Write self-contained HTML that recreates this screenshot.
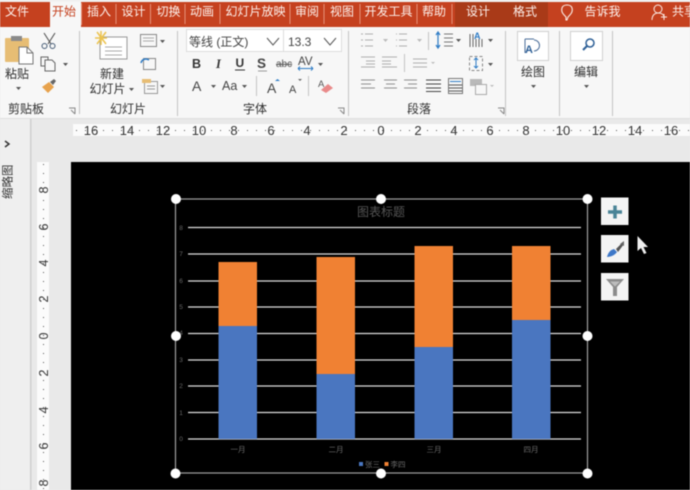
<!DOCTYPE html>
<html lang="zh">
<head>
<meta charset="utf-8">
<title>PowerPoint</title>
<style>
html,body{margin:0;padding:0;width:690px;height:490px;overflow:hidden;background:#e9e9e9}
svg{display:block;filter:blur(.45px)}
text{font-family:"Liberation Sans","Noto Sans CJK SC",sans-serif}
.t{font-size:12px;fill:#fdf1ec;text-anchor:middle}
.r{font-size:12px;fill:#2f2f2f;text-anchor:middle}
.ru{font-size:13px;fill:#333;text-anchor:middle}
.rv{font-size:12.5px;fill:#333;text-anchor:middle}
.ax{font-size:6.5px;fill:#666;text-anchor:middle}
.i{fill:none;stroke:#666;stroke-width:1}
.sep{stroke:#c4c4c4;stroke-width:1}
.grid{stroke:#dcdcdc;stroke-width:1.2}
.h{fill:#fff}
</style>
</head>
<body>
<svg width="690" height="490" viewBox="0 0 690 490" xmlns="http://www.w3.org/2000/svg">
<!-- backgrounds -->
<rect width="690" height="490" fill="#e9e9e9"/>
<rect width="690" height="2" fill="#f2f2f2"/>
<rect y="2" width="690" height="25" fill="#c5411f"/>
<rect x="455" y="2" width="93" height="25" fill="#a93a18"/>
<rect x="50" y="2" width="31" height="26" fill="#f7f7f7"/>
<rect y="27" width="690" height="91" fill="#f7f7f7"/>
<rect y="118" width="690" height="1" fill="#dedede"/>
<rect y="119" width="31" height="371" fill="#efefef"/>
<rect x="30" y="119" width="1.5" height="371" fill="#cfcfcf"/>

<!-- tabs -->
<text class="t" x="17" y="15.500">文件</text>
<text x="64" y="15.500" font-size="12" fill="#c5411f" text-anchor="middle">开始</text>
<text class="t" x="99" y="15.500">插入</text>
<text class="t" x="133.500" y="15.500">设计</text>
<text class="t" x="168.500" y="15.500">切换</text>
<text class="t" x="202" y="15.500">动画</text>
<text class="t" x="255.500" y="15.500">幻灯片放映</text>
<text class="t" x="307" y="15.500">审阅</text>
<text class="t" x="342" y="15.500">视图</text>
<text class="t" x="388.500" y="15.500">开发工具</text>
<text class="t" x="434" y="15.500">帮助</text>
<text class="t" x="478" y="15.500">设计</text>
<text class="t" x="525" y="15.500">格式</text>
<text class="t" x="602.500" y="15.500">告诉我</text>
<text class="t" x="684" y="15.500">共享</text>
<g stroke="#e5927a" stroke-width="1">
<path d="M81.500 3V25M116 4V24M150.500 4V24M185 4V24M220 4V24M290 4V24M324 4V24M360 4V24M417 4V24M452 4V24"/>
</g>
<path d="M566 17c-3-3-5-5-4-9 1-4 9-4 10 0 1 4-1 6-4 9l-1 3h-1z" fill="none" stroke="#fbeee8" stroke-width="1.100"/>
<circle cx="658" cy="9" r="4" fill="none" stroke="#fbeee8"/>
<path d="M652 20c0-5 3-7 6-7s5 1 6 3M664 14v6M661 17h6" fill="none" stroke="#fbeee8"/>

<!-- clipboard group -->
<rect x="5" y="38" width="24" height="24" rx="1" fill="#e7bd74"/>
<rect x="11" y="36" width="11" height="5" fill="#8a8a8a"/>
<path d="M19 47h8l6 6v11H19z" fill="#fff" stroke="#777"/>
<path d="M27 47v6h6" fill="none" stroke="#777"/>
<text class="r" x="17" y="78">粘贴</text>
<path d="M16 87h5l-2.500 3z" fill="#555"/>
<path d="M44 33l7 11M55 33l-7 11" stroke="#555" stroke-width="1.100" fill="none"/>
<circle cx="44.500" cy="46" r="2.500" fill="none" stroke="#445a74"/><circle cx="52.500" cy="46" r="2.500" fill="none" stroke="#445a74"/>
<rect x="41" y="57" width="7" height="9" class="i"/><path d="M45 60h7l3 3v8h-10z" fill="#f7f7f7" stroke="#666"/>
<path d="M63 63h5l-2.500 3z" fill="#555"/>
<path d="M42 87l7-5 5 5-6 6z" fill="#e7a24c"/><path d="M50 82l4-3 2 2-3 4z" fill="#666"/>
<text class="r" x="26" y="113">剪贴板</text>
<path d="M69 108h6v6" fill="none" stroke="#888"/><path d="M71 110l4 4" fill="none" stroke="#888"/>
<line class="sep" x1="79.500" y1="31" x2="79.500" y2="114"/>

<!-- slides group -->
<rect x="100" y="37" width="27" height="22" fill="#fff" stroke="#999"/>
<path d="M105 47h17M105 51h17M105 55h17" stroke="#aaa"/>
<path d="M97 32l9 12M106 32l-9 12M101 31v14M95 38h12" stroke="#ecc34e" stroke-width="1.500"/>
<text class="r" x="112" y="78">新建</text>
<text class="r" x="107.500" y="93">幻灯片</text>
<path d="M129 88h5l-2.500 3z" fill="#555"/>
<rect x="140.500" y="34.500" width="16" height="12" class="i" style="stroke:#888"/><path d="M143 38h11M143 41h11" stroke="#aaa"/>
<path d="M160 40h5l-2.500 3z" fill="#555"/>
<rect x="143.500" y="58.500" width="12" height="11" class="i" style="stroke:#888"/><path d="M141 63c1-4 5-5 8-3" fill="none" stroke="#2f7cc5" stroke-width="1.500"/>
<rect x="144.500" y="81.500" width="13" height="12" class="i" style="stroke:#999"/><rect x="142" y="79" width="9" height="4" fill="#e7bd74"/>
<path d="M147 86h8M147 89h8" stroke="#999"/>
<path d="M160 85h5l-2.500 3z" fill="#555"/>
<text class="r" x="128" y="113">幻灯片</text>
<line class="sep" x1="177.500" y1="31" x2="177.500" y2="116"/>

<!-- font group -->
<rect x="186.500" y="29.500" width="97" height="22" fill="#fff" stroke="#dcdcdc"/>
<rect x="283.500" y="29.500" width="58" height="22" fill="#fff" stroke="#dcdcdc"/>
<text x="189" y="46" font-size="12" fill="#444">等线 (正文)</text>
<text x="288" y="46" font-size="12" fill="#444">13.3</text>
<path d="M267 38l6 7 6-7M324 38l6 7 6-7" fill="none" stroke="#555"/>
<text x="192" y="68" font-size="12.500" font-weight="bold" fill="#333">B</text>
<text x="216" y="68" font-size="12.500" font-weight="bold" font-style="italic" fill="#333" style="font-family:'Liberation Serif',serif">I</text>
<text x="235.500" y="67" font-size="12" font-weight="bold" fill="#333">U</text><path d="M235 70h10" stroke="#333"/>
<text x="257" y="68" font-size="13.500" font-weight="bold" fill="#444">S</text><path d="M258 71h9" stroke="#999"/>
<text x="276" y="67" font-size="10" fill="#555" text-decoration="line-through">abc</text>
<text x="298" y="65" font-size="11.500" fill="#444">AV</text>
<path d="M298 68.500h15M298 68.500l2-2M298 68.500l2 2M313 68.500l-2-2M313 68.500l-2 2" stroke="#2f7cc5" fill="none"/>
<path d="M318 63h5l-2.500 3z" fill="#555"/>
<text x="192" y="91" font-size="14" fill="#444">A</text>
<path d="M211 85h5l-2.500 3z" fill="#555"/>
<text x="222" y="90" font-size="12.500" fill="#444">Aa</text>
<path d="M242 85h5l-2.500 3z" fill="#555"/>
<line class="sep" x1="256.500" y1="76" x2="256.500" y2="96"/>
<text x="267" y="93" font-size="14" fill="#444">A</text><path d="M275 81l2.500-2 2.500 2z" fill="#2f7cc5"/>
<text x="289" y="93" font-size="11" fill="#444">A</text><path d="M298 79l2 2 2-2z" fill="#666"/>
<line class="sep" x1="308.500" y1="76" x2="308.500" y2="96"/>
<text x="318" y="87" font-size="9.500" fill="#555">A</text><path d="M321 90l7-6 5 4-7 5z" fill="#e98a8a"/>
<text class="r" x="255" y="113">字体</text>
<path d="M338 108h6v6" fill="none" stroke="#888"/><path d="M340 110l4 4" fill="none" stroke="#888"/>
<line class="sep" x1="348.500" y1="31" x2="348.500" y2="116"/>

<!-- paragraph group -->
<g stroke="#aeaeae" fill="none">
<path d="M365 34h8M365 40h8M365 46h8M361 34h2M361 40h2M361 46h2M399 34h8M399 40h8M399 46h8M396 34h1M396 40h1M396 46h1"/>
<path d="M361 57h14M366 61h9M366 64h9M361 67h14M382 57h15M382 61h9M382 64h9M382 67h15"/>
<path d="M413 59h14M413 63h14M413 67h14"/>
</g>
<path d="M383 39h5l-2.500 3zM417 39h5l-2.500 3zM431 62h4l-2 2z" fill="#bbb"/>
<path d="M444 34h9M444 38h9M444 42h9M444 46h9" stroke="#777"/><path d="M438 32v16M436 35l2-3 2 3M436 45l2 3 2-3" stroke="#2f7cc5" fill="none" stroke-width="1.200"/>
<line class="sep" x1="428.500" y1="32" x2="428.500" y2="50"/>
<path d="M456 39h5l-2.500 3zM488 39h5l-2.500 3zM488 63h5l-2.500 3z" fill="#555"/>
<path d="M470 34v13M473 34v13M476 39v8M479 39v8M482 39v8" stroke="#666"/>
<text x="474" y="39" font-size="9" fill="#2f7cc5" font-weight="bold">A</text>
<rect x="469.500" y="56.500" width="13" height="14" class="i" style="stroke:#888;stroke-dasharray:3 2"/>
<path d="M476 58v10M474 60l2-2 2 2M474 66l2 2 2-2" stroke="#2f7cc5" fill="none"/>
<line class="sep" x1="404.500" y1="54" x2="404.500" y2="72"/>
<g stroke="#8f8f8f" fill="none">
<path d="M361 80h14M361 84h10M361 88h14M384 80h13M386 84h9M384 88h13M404 80h13M408 84h9M404 88h13"/>
</g>
<path d="M426 80h15M426 84h15M426 88h15M426 91.500h15" stroke="#444" fill="none"/>
<rect x="448.500" y="78.500" width="14" height="15" fill="none" stroke="#777"/>
<path d="M449 85h13M449 88h13M449 91h13" stroke="#555"/><path d="M450 81.500h11" stroke="#2f7cc5"/>
<rect x="470" y="79" width="12" height="7" fill="#b9b9b9"/><rect x="475.500" y="84.500" width="11" height="10" fill="#f7f7f7" stroke="#aaa"/>
<path d="M490 85h4l-2 2z" fill="#bbb"/>
<text class="r" x="419" y="113">段落</text>
<path d="M498 108h6v6" fill="none" stroke="#888"/><path d="M500 110l4 4" fill="none" stroke="#888"/>
<line class="sep" x1="505.500" y1="31" x2="505.500" y2="116"/>

<!-- drawing / edit -->
<rect x="517.500" y="31.500" width="31" height="29" fill="#fff" stroke="#d0d0d0"/>
<path d="M525 39h9M525 39v14" fill="none" stroke="#4a6d98"/>
<text x="525" y="53" font-size="11" fill="#2d5f96" font-weight="bold">A</text>
<path d="M534 40a5.500 5.500 0 1 1 0 11" fill="none" stroke="#4a6d98"/>
<text class="r" x="533" y="76">绘图</text>
<path d="M531 85h5l-2.500 3z" fill="#555"/>
<line class="sep" x1="559.500" y1="31" x2="559.500" y2="116"/>
<rect x="570.500" y="31.500" width="32" height="29" fill="#fff" stroke="#d0d0d0"/>
<circle cx="590" cy="43" r="4" fill="none" stroke="#2d5f96" stroke-width="1.500"/>
<path d="M587 46l-4 4" stroke="#2d5f96" stroke-width="2"/>
<text class="r" x="586" y="76">编辑</text>
<path d="M584 85h5l-2.500 3z" fill="#555"/>
<line class="sep" x1="612.500" y1="31" x2="612.500" y2="116"/>

<!-- rulers -->
<rect x="73" y="124" width="617" height="12" fill="#fbfbfb"/>
<rect x="37" y="162" width="12" height="328" fill="#fbfbfb"/>
<line x1="76" y1="130.500" x2="690" y2="130.500" stroke="#555" stroke-dasharray="1 8"/>
<line x1="43.500" y1="164" x2="43.500" y2="490" stroke="#555" stroke-dasharray="1 8"/>
<g>
<text class="ru" x="91" y="135">16</text><text class="ru" x="127" y="135">14</text><text class="ru" x="163" y="135">12</text><text class="ru" x="199" y="135">10</text>
<text class="ru" x="234" y="135">8</text><text class="ru" x="271" y="135">6</text><text class="ru" x="307" y="135">4</text><text class="ru" x="344" y="135">2</text>
<text class="ru" x="381" y="135">0</text><text class="ru" x="418" y="135">2</text><text class="ru" x="454" y="135">4</text><text class="ru" x="490" y="135">6</text>
<text class="ru" x="526" y="135">8</text><text class="ru" x="563" y="135">10</text><text class="ru" x="599" y="135">12</text><text class="ru" x="635" y="135">14</text><text class="ru" x="671" y="135">16</text>
</g>
<g>
<text class="rv" transform="translate(48 190) rotate(-90)">8</text>
<text class="rv" transform="translate(48 227) rotate(-90)">6</text>
<text class="rv" transform="translate(48 263) rotate(-90)">4</text>
<text class="rv" transform="translate(48 299) rotate(-90)">2</text>
<text class="rv" transform="translate(48 336) rotate(-90)">0</text>
<text class="rv" transform="translate(48 373) rotate(-90)">2</text>
<text class="rv" transform="translate(48 410) rotate(-90)">4</text>
<text class="rv" transform="translate(48 446) rotate(-90)">6</text>
<text class="rv" transform="translate(48 483) rotate(-90)">8</text>
</g>

<!-- left pane -->
<path d="M5 141l4 3-4 3" fill="none" stroke="#333" stroke-width="1.500"/>
<text transform="translate(11.500 199) rotate(-90)" font-size="11.500" fill="#333">缩略图</text>

<!-- slide -->
<rect x="71" y="162" width="619" height="328" fill="#000"/>

<!-- chart -->
<text x="381" y="216" font-size="12" fill="#555" text-anchor="middle">图表标题</text>
<g class="grid">
<line x1="188" y1="227.500" x2="581" y2="227.500"/>
<line x1="188" y1="254" x2="581" y2="254"/>
<line x1="188" y1="281" x2="581" y2="281"/>
<line x1="188" y1="307" x2="581" y2="307"/>
<line x1="188" y1="333.500" x2="581" y2="333.500"/>
<line x1="188" y1="360" x2="581" y2="360"/>
<line x1="188" y1="386" x2="581" y2="386"/>
<line x1="188" y1="412.500" x2="581" y2="412.500"/>
<line x1="188" y1="439" x2="581" y2="439"/>
</g>
<g>
<text class="ax" x="181" y="230">8</text><text class="ax" x="181" y="256">7</text><text class="ax" x="181" y="283">6</text>
<text class="ax" x="181" y="309">5</text><text class="ax" x="181" y="335">4</text><text class="ax" x="181" y="362">3</text>
<text class="ax" x="181" y="388">2</text><text class="ax" x="181" y="415">1</text><text class="ax" x="181" y="441">0</text>
</g>
<rect x="218.500" y="262" width="38.500" height="64" fill="#f08133"/>
<rect x="218.500" y="326" width="38.500" height="113" fill="#4a76c0"/>
<rect x="316.500" y="257" width="38.500" height="117" fill="#f08133"/>
<rect x="316.500" y="374" width="38.500" height="65" fill="#4a76c0"/>
<rect x="414.500" y="246" width="38.500" height="101" fill="#f08133"/>
<rect x="414.500" y="347" width="38.500" height="92" fill="#4a76c0"/>
<rect x="512" y="246" width="38.500" height="74" fill="#f08133"/>
<rect x="512" y="320" width="38.500" height="119" fill="#4a76c0"/>
<g font-size="7.500" fill="#6a6a6a" text-anchor="middle">
<text x="238" y="452">一月</text><text x="336" y="452">二月</text><text x="434" y="452">三月</text><text x="531" y="452">四月</text>
</g>
<rect x="359" y="462" width="4" height="4" fill="#4a76c0"/><text x="372.500" y="467" font-size="7.500" fill="#6a6a6a" text-anchor="middle">张三</text>
<rect x="384.500" y="462" width="4" height="4" fill="#f08133"/><text x="398" y="467" font-size="7.500" fill="#6a6a6a" text-anchor="middle">李四</text>

<!-- selection -->
<rect x="175.500" y="199" width="412" height="274" fill="none" stroke="#a0a0a0" stroke-width="1.200"/>
<g>
<circle class="h" cx="176" cy="199" r="5"/><circle class="h" cx="381" cy="199" r="5"/><circle class="h" cx="587.500" cy="199" r="5"/>
<circle class="h" cx="176" cy="336" r="5"/><circle class="h" cx="587.500" cy="336" r="5"/>
<circle class="h" cx="175.500" cy="473.500" r="5"/><circle class="h" cx="381" cy="473.500" r="5"/><circle class="h" cx="587.500" cy="473.500" r="5"/>
</g>

<!-- chart buttons -->
<rect x="601" y="197.500" width="27.500" height="27.500" fill="#f4f4f4"/>
<rect x="601" y="235" width="27.500" height="27.500" fill="#f4f4f4"/>
<rect x="601" y="273" width="27.500" height="27.500" fill="#f4f4f4"/>
<path d="M608 212h14M615 205.500v13" stroke="#4a8396" stroke-width="3.500"/>
<path d="M607 257c1-4 3-7 7-8l3 3c-2 3-6 5-10 5z" fill="#3e78c8"/>
<path d="M616 249l7-7 1 2-6 8z" fill="#555"/><path d="M620 244l4-3 0 5z" fill="#666"/>
<path d="M606 279h18l-7 8v9h-4v-9z" fill="#8c8c8c"/>
<path d="M610 281.500h10l-5 5z" fill="#bdbdbd"/>

<!-- cursor -->
<path d="M637.500 236v15l3.500-3 3 6 2.500-1-3-6h4.500z" fill="#eee"/>
</svg>
</body>
</html>
